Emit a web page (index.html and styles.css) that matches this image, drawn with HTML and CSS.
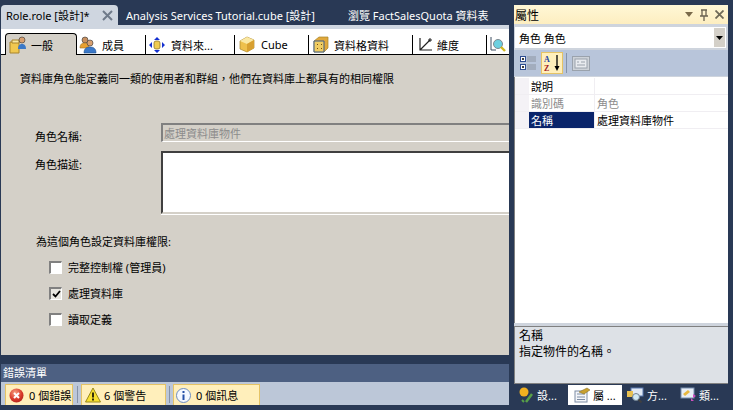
FILE: index.html
```html
<!DOCTYPE html>
<html lang="zh-Hant">
<head>
  <meta charset="UTF-8">
  <title>Role.role [設計]</title>
  <link rel="stylesheet" href="styles.css">
</head>
<body>
  <div class="shell">
    <div class="left">
      <div class="doc-tabs">
        <div class="doc-tab active">
          <span>Role.role [設計]*</span>
          <svg class="doc-close" width="11" height="11" viewBox="0 0 11 11"><path d="M1 1l9 9M10 1l-9 9" stroke="#6f7a8a" stroke-width="2"/></svg>
        </div>
        <div class="doc-tab cube">Analysis Services Tutorial.cube [設計]</div>
        <div class="doc-tab browse">瀏覽 FactSalesQuota 資料表</div>
      </div>
      <div class="doc-strip"></div>
      <div class="designer">
        <div class="page-tabs">
          <div class="page-tab selected">
            <svg width="18" height="18" viewBox="0 0 18 18"><path d="M1 6h9v11H1z" fill="#f0c850" stroke="#a8842c"/><path d="M3 4h7v3H3z" fill="#f8e8a0" stroke="#a8842c"/><circle cx="13" cy="4" r="3" fill="#d8a070" stroke="#333" stroke-width=".6"/><path d="M9 13c0-4 2-5 4-5s4 1 4 5z" fill="#3a78c8"/></svg>
            <span>一般</span>
          </div>
          <div class="page-tab t-member">
            <svg width="18" height="18" viewBox="0 0 18 18"><circle cx="6" cy="4" r="3" fill="#c89060" stroke="#333" stroke-width=".6"/><path d="M1 12c0-4 2-5 5-5s4 1 4 5z" fill="#e8a030" stroke="#a07020" stroke-width=".6"/><circle cx="11" cy="7" r="3" fill="#d8a070" stroke="#333" stroke-width=".6"/><path d="M5 17c0-5 3-6 6-6s6 1 6 6z" fill="#3a78c8" stroke="#24508c" stroke-width=".6"/></svg>
            <span>成員</span>
          </div>
          <div class="page-tab t-source">
            <svg width="16" height="16" viewBox="0 0 16 16"><path d="M8 0l3 3H5zM8 16l-3-3h6zM0 8l3-3v6zM16 8l-3 3V5z" fill="#1430d0"/><rect x="5" y="4" width="6" height="8" rx="2" fill="#f0cc50" stroke="#806820" stroke-width=".7"/></svg>
            <span>資料來...</span>
          </div>
          <div class="page-tab t-cube">
            <svg width="16" height="17" viewBox="0 0 16 17"><path d="M1 5l7-4 7 3v8l-7 4-7-3z" fill="#eec04c" stroke="#a88428" stroke-width=".7"/><path d="M1 5l7 3 7-4-7-3z" fill="#fae8a4"/><path d="M8 8l7-4v8l-7 4z" fill="#d8a030"/></svg>
            <span>Cube</span>
          </div>
          <div class="page-tab t-cell">
            <svg width="16" height="17" viewBox="0 0 16 17"><path d="M1 5l5-4h9v11l-4 4H1z" fill="#e0a83c" stroke="#a88428" stroke-width=".7"/><path d="M1 5h10v11H1z" fill="#f0cc60" stroke="#3c5c88"/><path d="M4 8h1v1H4zM8 8h1v1H8zM4 12h1v1H4zM8 12h1v1H8z" fill="#705010"/></svg>
            <span>資料格資料</span>
          </div>
          <div class="page-tab t-dim">
            <svg width="15" height="15" viewBox="0 0 15 15"><path d="M2 1v12h12M2 13L12 3" fill="none" stroke="#222" stroke-width="1.2"/><path d="M12 1v4M10 3h4" stroke="#222"/></svg>
            <span>維度</span>
          </div>
          <div class="page-tab t-more">
            <svg width="16" height="17" viewBox="0 0 16 17"><path d="M1 1v13h5" fill="none" stroke="#3c4c60"/><circle cx="8" cy="8" r="4.5" fill="#6cd0e0" stroke="#808890"/><path d="M11 11l4 4" stroke="#d0b820" stroke-width="2.4"/></svg>
          </div>
        </div>
        <div class="form">
          <p class="intro">資料庫角色能定義同一類的使用者和群組，他們在資料庫上都具有的相同權限</p>
          <div class="field name-field">
            <label class="field-label">角色名稱:</label>
            <div class="name-input">處理資料庫物件</div>
          </div>
          <div class="field desc-field">
            <label class="field-label">角色描述:</label>
            <div class="desc-input"></div>
          </div>
          <p class="perm-title">為這個角色設定資料庫權限:</p>
          <div class="check-row"><span class="check"></span><span>完整控制權 (管理員)</span></div>
          <div class="check-row"><span class="check on"><svg width="9" height="8" viewBox="0 0 9 8"><path d="M1 4l2.5 2.5L8 1" fill="none" stroke="#000" stroke-width="1.8"/></svg></span><span>處理資料庫</span></div>
          <div class="check-row"><span class="check"></span><span>讀取定義</span></div>
        </div>
      </div>
      <div class="error-title">錯誤清單</div>
      <div class="error-bar">
        <div class="err-btn b-err">
          <svg width="15" height="15" viewBox="0 0 15 15"><defs><radialGradient id="redball" cx=".4" cy=".3" r=".8"><stop offset="0" stop-color="#f8a080"/><stop offset=".6" stop-color="#d8382a"/><stop offset="1" stop-color="#a82018"/></radialGradient></defs><circle cx="7.5" cy="7.5" r="7" fill="url(#redball)"/><path d="M5 5l5 5M10 5l-5 5" stroke="#fff" stroke-width="2"/></svg>
          <span>0 個錯誤</span>
        </div>
        <i class="sep"></i>
        <div class="err-btn b-warn">
          <svg width="16" height="16" viewBox="0 0 16 16"><path d="M8 1l7.500 14H.5z" fill="#f8e030" stroke="#98881c"/><path d="M8 5.500v5M8 11.500v2" stroke="#000" stroke-width="1.6"/></svg>
          <span>6 個警告</span>
        </div>
        <i class="sep"></i>
        <div class="err-btn b-info">
          <svg width="15" height="15" viewBox="0 0 15 15"><circle cx="7.500" cy="7.500" r="7" fill="#f4f8ff" stroke="#6c8cc0"/><path d="M7.500 3v2M7.500 6.500V12" stroke="#2450a8" stroke-width="2"/></svg>
          <span>0 個訊息</span>
        </div>
      </div>
    </div>

    <div class="right">
      <div class="panel">
        <div class="panel-title">
          <span>屬性</span>
          <div class="panel-btns">
            <svg width="8" height="5" viewBox="0 0 8 5"><path d="M0 0h8L4 5z" fill="#7a6a4a"/></svg>
            <svg width="8" height="12" viewBox="0 0 8 12"><path d="M2 1v6M6 1v6M0 7h8M4 7v5M1 1h6" fill="none" stroke="#6a6250" stroke-width="1.300"/></svg>
            <svg width="9" height="9" viewBox="0 0 9 9"><path d="M.5.5l8 8M8.500.5l-8 8" stroke="#6f6a58" stroke-width="1.800"/></svg>
          </div>
        </div>
        <div class="combo">
          <span class="combo-text">角色 角色</span>
          <span class="combo-arrow"><svg width="7" height="4" viewBox="0 0 7 4"><path d="M0 0h7L3.500 4z" fill="#000"/></svg></span>
        </div>
        <div class="prop-tools">
          <span class="tool">
            <svg width="18" height="18" viewBox="0 0 18 18"><rect x=".5" y="2.500" width="5" height="5" fill="#fff" stroke="#2c4c90"/><rect x=".5" y="10.500" width="5" height="5" fill="#fff" stroke="#2c4c90"/><path d="M2 5h2M3 4v2M2 13h2M3 12v2" stroke="#000"/><path d="M7 3h9M7 5h9M7 7h9M7 11h9M7 13h9M7 15h9" stroke="#8c94a0"/></svg>
          </span>
          <span class="tool pressed">
            <svg width="18" height="18" viewBox="0 0 18 18"><text class="az az-a" x="1" y="8">A</text><text class="az az-z" x="1" y="17">Z</text><path d="M14 1v12" stroke="#000" stroke-width="1.300"/><path d="M11.500 12h5L14 17z" fill="#000"/></svg>
          </span>
          <i class="tool-sep"></i>
          <span class="tool">
            <svg width="18" height="15" viewBox="0 0 18 15"><rect x=".5" y=".5" width="17" height="14" fill="#cdd2d8" stroke="#9aa2ac"/><rect x="3" y="3" width="12" height="9" fill="#e8ebef" stroke="#9aa2ac"/><path d="M5 6h2M9 6h4M5 9h8" stroke="#9aa2ac"/></svg>
          </span>
        </div>
        <div class="prop-grid">
          <div class="prop-row"><span class="prop-gutter"></span><span class="prop-key">說明</span><span class="prop-val"></span></div>
          <div class="prop-row readonly"><span class="prop-gutter"></span><span class="prop-key">識別碼</span><span class="prop-val">角色</span></div>
          <div class="prop-row current"><span class="prop-gutter"></span><span class="prop-key">名稱</span><span class="prop-val">處理資料庫物件</span></div>
        </div>
        <div class="prop-help">
          <div>名稱</div>
          <div>指定物件的名稱。</div>
        </div>
      </div>
      <div class="side-tabs">
        <div class="side-tab">
          <svg width="15" height="16" viewBox="0 0 15 16"><circle cx="5" cy="5" r="4.500" fill="#f0b020"/><path d="M7 15l6-8" stroke="#58a048" stroke-width="2.500"/><path d="M3 13l2 2" stroke="#58a048" stroke-width="2"/></svg>
          <span>設...</span>
        </div>
        <div class="side-tab on">
          <svg width="16" height="16" viewBox="0 0 16 16"><rect x="1" y="4" width="12" height="11" fill="#f4f6fa" stroke="#7c8ca4"/><path d="M3 7h8M3 10h8M3 12.500h8" stroke="#7c8ca4"/><path d="M5 5l8-4 3 2-6 4z" fill="#c8a030" stroke="#806818" stroke-width=".5"/></svg>
          <span>屬 ...</span>
        </div>
        <div class="side-tab">
          <svg width="17" height="16" viewBox="0 0 17 16"><rect x="4" y="1" width="12" height="8" fill="#e0e8f4" stroke="#5878b0"/><path d="M0 4h6v6H0z" fill="#e8c050"/><circle cx="9" cy="10" r="3.500" fill="#d0e8f4" stroke="#708090"/><path d="M11.500 12.500l3 3" stroke="#404040" stroke-width="2"/></svg>
          <span>方...</span>
        </div>
        <div class="side-tab last">
          <svg width="17" height="16" viewBox="0 0 17 16"><rect x="1" y="1" width="13" height="10" fill="#e8eef6" stroke="#7890b0"/><path d="M3 7l5-4 2 2-5 4z" fill="#e8b840"/><path d="M13 7l3 2-3 2zM11 11l3 3h-3z" fill="#d050c0"/></svg>
          <span>類...</span>
        </div>
      </div>
    </div>
  </div>
</body>
</html>
```

FILE: styles.css
```css
html, body {
  margin: 0;
  padding: 0;
  height: 100%;
  overflow: hidden;
}
body {
  background-color: #293955;
  color: #000;
  font-family: "Noto Sans", "Noto Sans CJK TC", sans-serif;
  font-size: 11px;
}
.shell {
  display: flex;
  width: 733px;
  height: 410px;
}
p {
  margin: 0;
}

/* left side */
.left {
  width: 509px;
  margin-right: 5px;
  display: flex;
  flex-direction: column;
}
.doc-tabs {
  display: flex;
  height: 20px;
  padding-top: 5px;
  color: #fff;
}
.doc-tab {
  display: flex;
  align-items: center;
  white-space: nowrap;
}
.doc-tab.active {
  width: 117px;
  margin-left: 1px;
  padding: 0 5px;
  box-sizing: border-box;
  justify-content: space-between;
  background-color: #cfd6e0;
  color: #000;
  border-radius: 4px 4px 0 0;
}
.doc-tab.cube {
  margin-left: 8px;
  width: 222px;
}
.doc-strip {
  height: 4px;
  margin-left: 1px;
  background-color: #cfd6e0;
}
.designer {
  height: 326px;
  margin-left: 1px;
  background-color: #d4d0c8;
  overflow: hidden;
}
.page-tabs {
  display: flex;
  align-items: flex-end;
  height: 25px;
  background-color: #fff;
  border-bottom: 1px solid #000;
  padding-left: 4px;
}
.page-tab {
  display: flex;
  align-items: center;
  gap: 6px;
  height: 19px;
  box-sizing: border-box;
  padding-left: 3px;
  border-right: 1px solid #000;
  white-space: nowrap;
}
.page-tab.selected {
  width: 72px;
  height: 22px;
  gap: 4px;
  background-color: #d4d0c8;
  border: 1px solid #000;
  border-bottom: 0;
  border-radius: 4px 4px 0 0;
  position: relative;
  top: 1px;
}
.page-tab.t-member { width: 69px; gap: 5px; padding-left: 2px; }
.page-tab.t-source { width: 89px; padding-left: 3px; gap: 6px; }
.page-tab.t-cube { width: 74px; padding-left: 4px; gap: 6px; }
.page-tab.t-cell { width: 104px; padding-left: 4px; gap: 5px; }
.page-tab.t-dim { width: 74px; padding-left: 5px; gap: 4px; }
.page-tab.t-more { padding-left: 3px; border-right: 0; }
.form {
  padding: 16px 0 0 19px;
}
.intro {
  line-height: 16px;
}
.field {
  display: flex;
}
.field-label {
  width: 141px;
  flex: none;
  padding-left: 15px;
  box-sizing: border-box;
}
.name-field {
  margin-top: 36px;
}
.name-field .field-label {
  padding-top: 5px;
  line-height: 18px;
}
.name-input {
  width: 360px;
  height: 19px;
  box-sizing: border-box;
  border-top: 2px solid #808080;
  border-left: 2px solid #808080;
  border-bottom: 1px solid #fff;
  color: #8c8c8c;
  line-height: 17px;
  padding-left: 1px;
}
.desc-field {
  margin-top: 5px;
}
.desc-field .field-label {
  padding-top: 6px;
  line-height: 16px;
}
.desc-input {
  width: 360px;
  height: 63px;
  box-sizing: border-box;
  border-top: 2px solid #404040;
  border-left: 2px solid #404040;
  border-bottom: 2px solid #d4d0c8;
  background-color: #fff;
  box-shadow: 0 1px 0 #fff;
}
.perm-title {
  margin-top: 20px;
  padding-left: 16px;
  line-height: 16px;
}
.check-row {
  display: flex;
  align-items: center;
  gap: 6px;
  height: 16px;
  margin-top: 10px;
  padding-left: 29px;
}
.perm-title + .check-row {
  margin-top: 9px;
}
.check {
  width: 13px;
  height: 13px;
  box-sizing: border-box;
  border: 2px solid #808080;
  border-right: 1px solid #fff;
  border-bottom: 1px solid #fff;
  background-color: #fff;
  display: flex;
  align-items: center;
  justify-content: center;
}
.check.on {
  background-color: #e8e6e0;
}

/* error list */
.error-title {
  margin-top: 9px;
  height: 18px;
  margin-left: 1px;
  padding-left: 2px;
  line-height: 18px;
  color: #fff;
  background-color: #4d6082;
}
.error-bar {
  display: flex;
  align-items: flex-start;
  height: 23px;
  margin-left: 1px;
  padding: 2px 0 0 4px;
  box-sizing: border-box;
  background-color: #bcc7d8;
}
.err-btn {
  display: flex;
  align-items: center;
  gap: 5px;
  height: 21px;
  box-sizing: border-box;
  border: 1px solid #e5c365;
  border-bottom: 0;
  background-color: #ffefbb;
  padding-left: 3px;
}
.b-err { width: 68px; }
.b-warn { width: 85px; gap: 3px; }
.b-info { width: 87px; padding-left: 2px; }
.sep {
  width: 1px;
  height: 17px;
  margin: 2px 3px 0 4px;
  background-color: #8592a8;
}
.b-warn + .sep {
  margin-left: 3px;
}

/* properties panel */
.right {
  width: 214px;
  padding-top: 5px;
  box-sizing: border-box;
  display: flex;
  flex-direction: column;
}
.panel {
  height: 379px;
  box-sizing: border-box;
  background-color: #ced4dd;
  display: flex;
  flex-direction: column;
}
.panel-title {
  display: flex;
  justify-content: space-between;
  align-items: center;
  height: 19px;
  padding: 0 4px 0 1px;
  font-size: 12px;
  background: linear-gradient(#fff7d6, #fdeec0);
}
.panel-btns {
  display: flex;
  align-items: center;
  gap: 7px;
}
.combo {
  display: flex;
  align-items: center;
  justify-content: space-between;
  height: 21px;
  margin: 3px 2px 2px 1px;
  padding: 0 0 0 4px;
  background-color: #fff;
}
.combo-arrow {
  width: 11px;
  height: 19px;
  margin-right: 1px;
  background-color: #d4d0c8;
  display: flex;
  align-items: center;
  justify-content: center;
}
.prop-tools {
  display: flex;
  align-items: center;
  height: 26px;
  padding-left: 5px;
  background-color: #b8c5da;
}
.tool {
  width: 20px;
  height: 20px;
  display: flex;
  align-items: center;
  justify-content: center;
}
.tool.pressed {
  width: 22px;
  height: 22px;
  box-sizing: border-box;
  margin-left: 2px;
  background-color: #ffefbb;
  border: 1px solid #e5c365;
}
.tool-sep {
  width: 1px;
  height: 20px;
  margin: 0 4px 0 3px;
  background-color: #8592a8;
}
.az {
  font-family: "Liberation Serif", serif;
  font-size: 8px;
  font-weight: bold;
}
.az-a { fill: #2040a0; }
.az-z { fill: #a02020; }
.prop-grid {
  flex: 1;
  margin-top: 1px;
  background-color: #fff;
  border-left: 1px solid #808080;
  padding-top: 1px;
}
.prop-row {
  display: flex;
  height: 17px;
  line-height: 17px;
  box-sizing: border-box;
  border-bottom: 1px solid #f0eef2;
}
.prop-gutter {
  width: 14px;
  flex: none;
  background-color: #f4f2f6;
}
.prop-key {
  width: 66px;
  flex: none;
  padding-left: 2px;
  box-sizing: border-box;
  border-right: 1px solid #f0eef2;
}
.prop-val {
  padding-left: 2px;
}
.readonly {
  color: #8c8c8c;
}
.current .prop-key {
  background-color: #0a246a;
  color: #fff;
}
.prop-help {
  height: 58px;
  box-sizing: border-box;
  margin-top: 3px;
  padding: 1px 4px;
  line-height: 16px;
  font-size: 12px;
  background-color: #dde1e6;
  border: 1px solid #808080;
  border-right: 0;
}
.side-tabs {
  display: flex;
  height: 26px;
  padding-top: 1px;
  box-sizing: border-box;
  color: #fff;
}
.side-tab {
  width: 54px;
  height: 20px;
  display: flex;
  align-items: center;
  gap: 3px;
  padding-left: 5px;
  box-sizing: border-box;
  white-space: nowrap;
}
.side-tab.on {
  background-color: #fff;
  color: #000;
  padding-left: 6px;
}
.side-tab.last {
  padding-left: 4px;
  width: 52px;
  gap: 2px;
}
```
